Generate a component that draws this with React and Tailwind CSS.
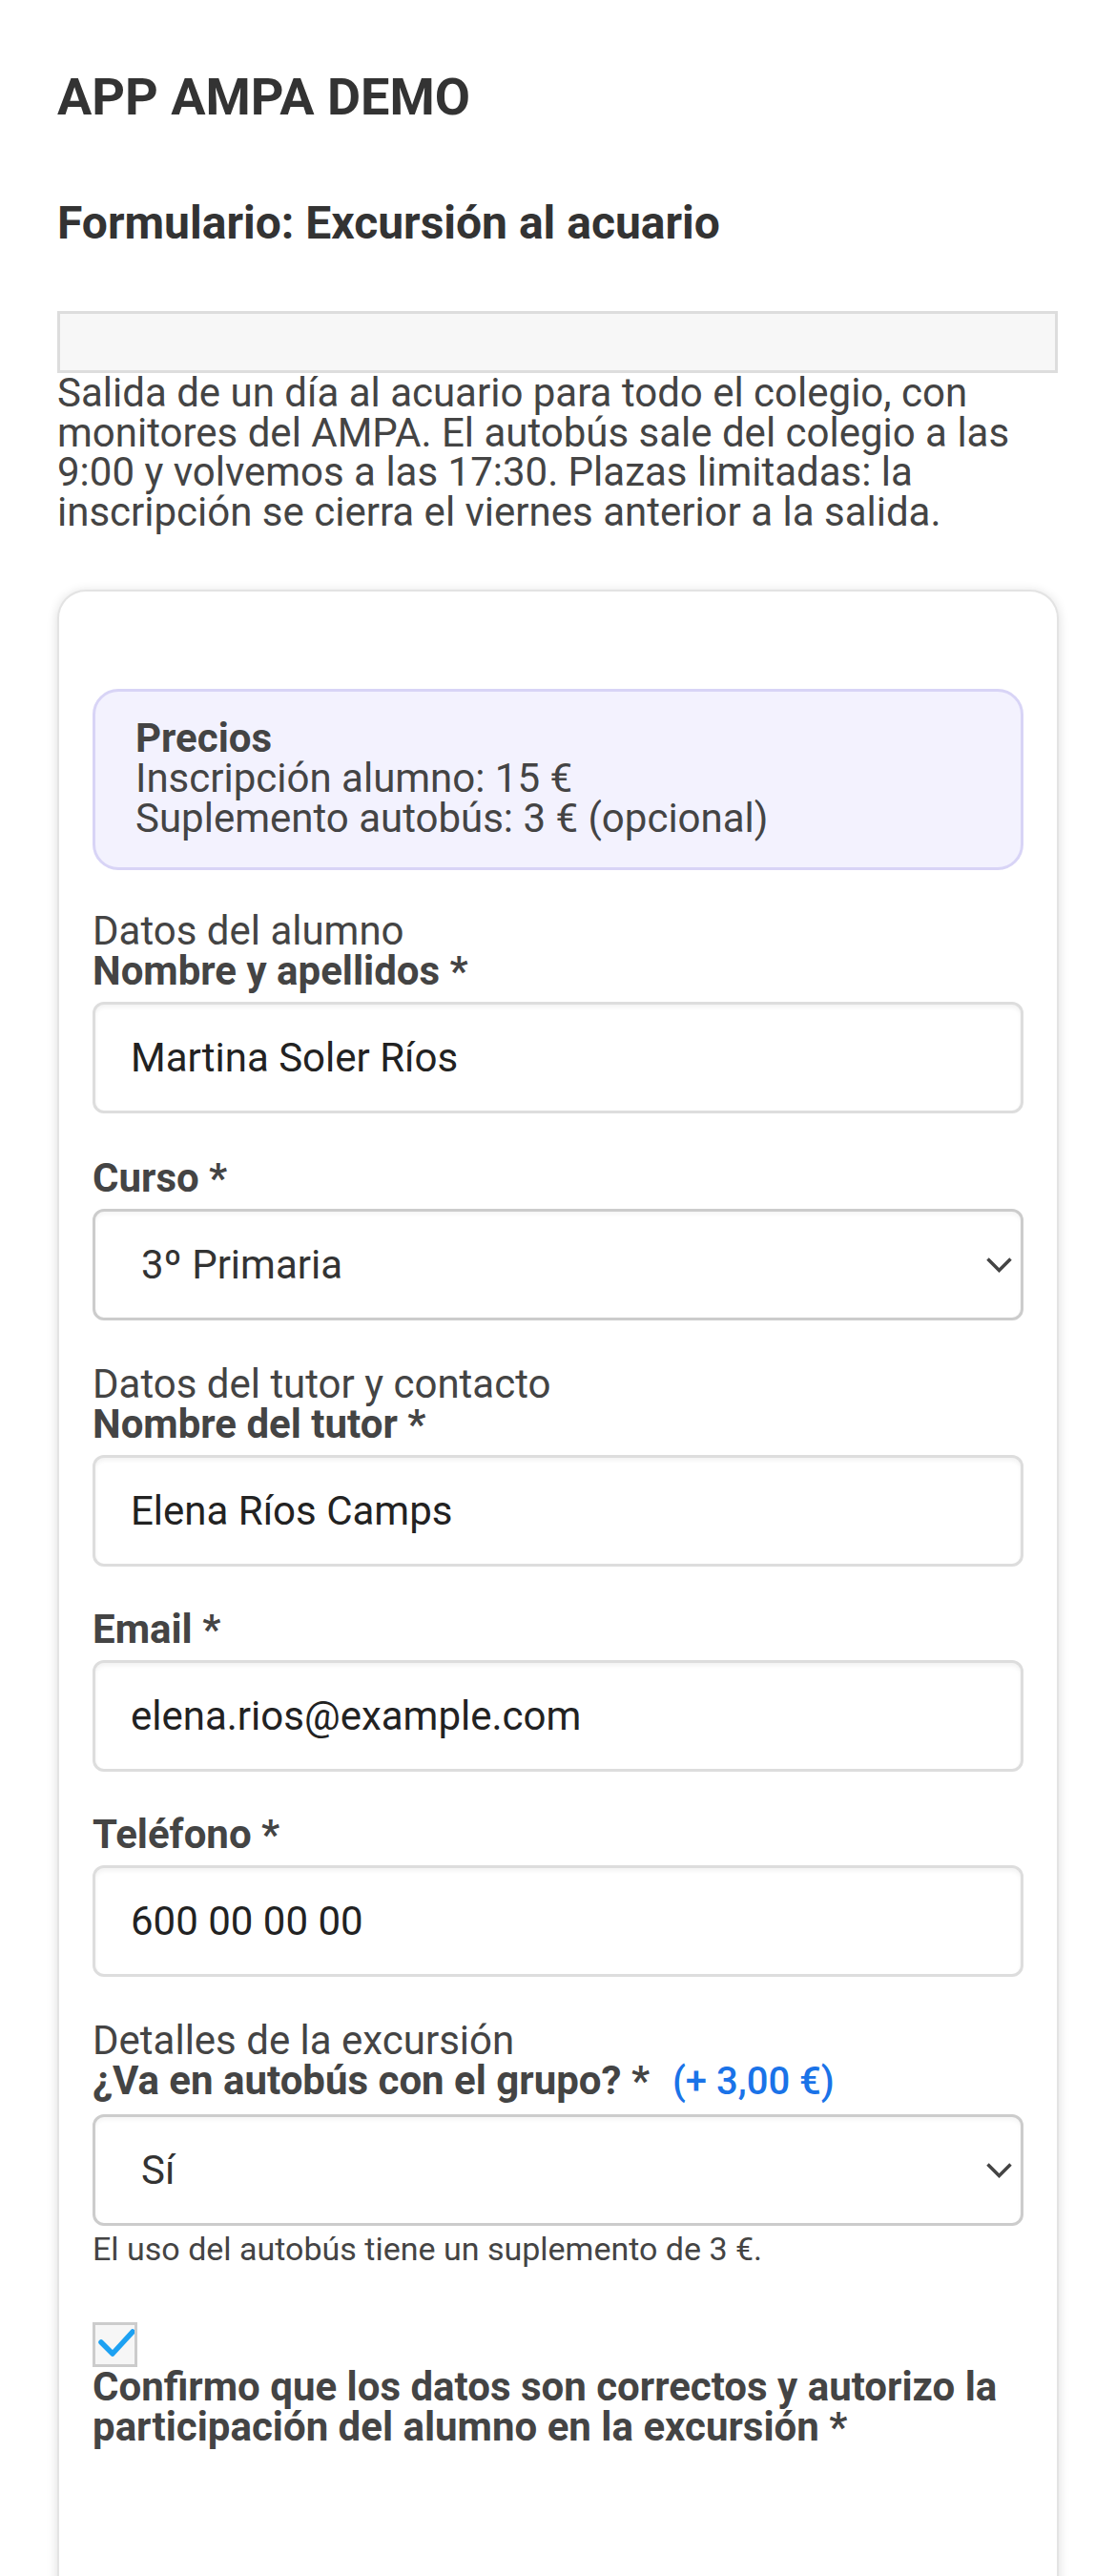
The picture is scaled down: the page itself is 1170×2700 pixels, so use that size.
import React from "react";

function Label({ children }) {
  return (
    <div className="text-[42px] leading-[42px] font-bold text-[#444]">{children}</div>
  );
}

function Legend({ children }) {
  return <div className="text-[42px] leading-[42px] text-[#444]">{children}</div>;
}

function TextInput({ value }) {
  return (
    <div className="mt-[11px] h-[117px] rounded-[12px] border-[3px] border-[#dddddd] bg-white shadow-[inset_0_3px_4px_rgba(0,0,0,0.05)] flex items-center pl-[37px] text-[42px] leading-[42px] text-[#222]">
      {value}
    </div>
  );
}

function SelectBox({ value, mt = "mt-[11px]" }) {
  return (
    <div className={`${mt} h-[117px] rounded-[12px] border-[3px] border-[#cccccc] bg-white shadow-[inset_0_3px_4px_rgba(0,0,0,0.04)] flex items-center justify-between pl-[48px] pr-[9px] text-[42px] leading-[42px] text-[#333]`}>
      <span>{value}</span>
      <svg width="27" height="16" viewBox="0 0 27 16" fill="none">
        <path d="M1.5 1.5 L13.5 13.5 L25.5 1.5" stroke="#444" strokeWidth="3.5" />
      </svg>
    </div>
  );
}

export default function App() {
  return (
    <div className="min-h-[2700px] bg-white font-['Roboto',sans-serif] text-[#444]">
      <div className="px-[60px] pt-[75px]">
        <h1 className="text-[54px] leading-[54px] font-bold text-[#333]">APP AMPA DEMO</h1>
        <h2 className="mt-[81px] text-[48px] leading-[48px] font-bold text-[#333]">
          Formulario: Excursión al acuario
        </h2>
        <div className="mt-[68px] h-[65px] w-[1049px] border-[3px] border-[#dddddd] bg-[#f7f7f7]"></div>
        <p className="text-[42px] leading-[41.5px] text-[#444] w-[1049px]">
          Salida de un día al acuario para todo el colegio, con monitores del AMPA. El autobús sale del colegio a las 9:00 y volvemos a las 17:30. Plazas limitadas: la inscripción se cierra el viernes anterior a la salida.
        </p>

        <div className="mt-[61px] w-[1050px] rounded-t-[30px] border-[2px] border-b-0 border-[#e3e3e3] bg-white shadow-[0_2px_12px_rgba(0,0,0,0.14)] px-[35px] pt-[102px] pb-[300px]">
          <div className="rounded-[27px] border-[3px] border-[#d8d4f6] bg-[#f3f2fe] pl-[42px] pt-[28px] pb-[30px] text-[42px] leading-[42px] text-[#444]">
            <div className="font-bold">Precios</div>
            <div>Inscripción alumno: 15 €</div>
            <div>Suplemento autobús: 3 € (opcional)</div>
          </div>

          <div className="mt-[43px]">
            <Legend>Datos del alumno</Legend>
            <Label>Nombre y apellidos *</Label>
            <TextInput value="Martina Soler Ríos" />
          </div>

          <div className="mt-[47px]">
            <Label>Curso *</Label>
            <SelectBox value="3º Primaria" />
          </div>

          <div className="mt-[46px]">
            <Legend>Datos del tutor y contacto</Legend>
            <Label>Nombre del tutor *</Label>
            <TextInput value="Elena Ríos Camps" />
          </div>

          <div className="mt-[45px]">
            <Label>Email *</Label>
            <TextInput value="elena.rios@example.com" />
          </div>

          <div className="mt-[45px]">
            <Label>Teléfono *</Label>
            <TextInput value="600 00 00 00" />
          </div>

          <div className="mt-[46px]">
            <Legend>Detalles de la excursión</Legend>
            <div className="text-[42px] leading-[42px] font-bold text-[#444]">
              ¿Va en autobús con el grupo? *
              <span className="ml-[24px] text-[40px] font-medium text-[#1a73e8]">(+ 3,00 €)</span>
            </div>
            <SelectBox value="Sí" mt="mt-[13px]" />
            <div className="mt-[7px] text-[34px] leading-[34px] text-[#444]">
              El uso del autobús tiene un suplemento de 3 €.
            </div>
          </div>

          <div className="mt-[60px]">
            <div className="w-[47px] h-[47px] border-[3px] border-[#cccccc] bg-[#f6f6f6] flex items-center justify-center">
              <svg width="41" height="41" viewBox="0 0 41 41" fill="none">
                <path d="M6 18 L18 30 L39 7" stroke="#1da1f2" strokeWidth="5.5" strokeLinecap="round" strokeLinejoin="round" />
              </svg>
            </div>
            <div className="text-[42px] leading-[42px] font-bold text-[#444]">
              Confirmo que los datos son correctos y autorizo la participación del alumno en la excursión *
            </div>
          </div>
        </div>
      </div>
    </div>
  );
}
